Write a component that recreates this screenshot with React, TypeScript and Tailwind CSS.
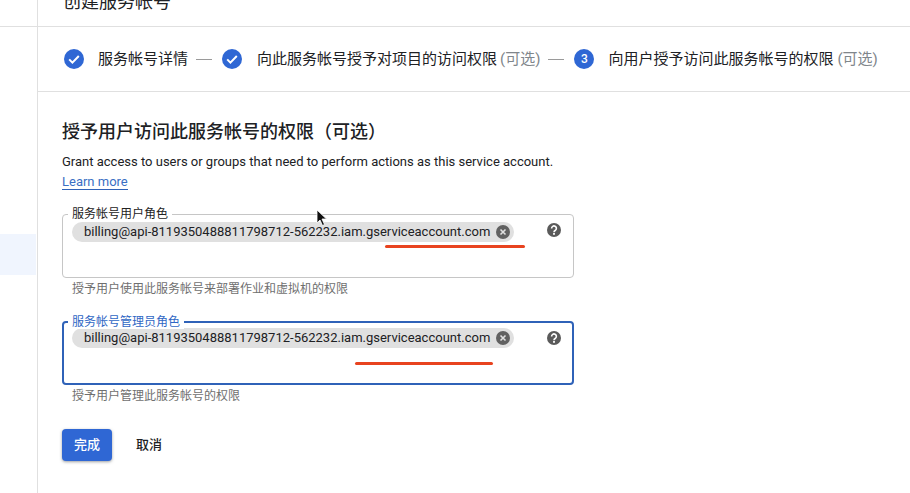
import React from "react";

const sans = "font-['Roboto','Noto_Sans_CJK_SC',sans-serif]";

function CheckStep() {
  return (
    <svg width="20" height="20" viewBox="0 0 20 20" className="shrink-0">
      <circle cx="10" cy="10" r="10" fill="#2f67d4" />
      <path d="M5.2 10.4l3.2 3.2 6.4-6.6" fill="none" stroke="#fff" strokeWidth="2" />
    </svg>
  );
}

function Dash() {
  return <div className="ml-[8px] mr-[10px] h-px w-4 shrink-0 bg-[#9a9a9a]" />;
}

function ChipClose() {
  return (
    <svg width="14" height="14" viewBox="0 0 14 14" className="shrink-0">
      <circle cx="7" cy="7" r="7" fill="#616161" />
      <path d="M4.5 4.5l5 5M9.5 4.5l-5 5" stroke="#e0e0e0" strokeWidth="1.6" />
    </svg>
  );
}

function Help() {
  return (
    <svg width="14" height="14" viewBox="0 0 14 14" className="shrink-0">
      <circle cx="7" cy="7" r="7" fill="#5a5a5a" />
      <path d="M4.6 5.4a2.4 2.4 0 1 1 3.8 1.9c-.8.6-1.4.9-1.4 1.9" fill="none" stroke="#fff" strokeWidth="1.6" />
      <rect x="6.1" y="10" width="1.8" height="1.8" fill="#fff" />
    </svg>
  );
}

function RoleField({ label, hint, focused, markClass }: { label: string; hint: string; focused?: boolean; markClass: string }) {
  return (
    <div>
      <div className={`relative h-[64px] w-[512px] rounded-[4px] bg-white ${focused ? "border-2 border-[#2f62b8]" : "border border-[#c6c6c6]"}`}>
        <span
          className={`absolute top-[-8px] bg-white px-[4px] text-[12px] leading-[14px] ${focused ? "left-[4px] text-[#2f67c4]" : "left-[5px] text-[#222]"}`}
        >
          {label}
        </span>
        <div className={`flex items-start justify-between ${focused ? "pl-[8px] pr-[11px] pt-[5px]" : "pl-[9px] pr-[12px] pt-[7px]"}`}>
          <div className="flex h-[20px] w-[442px] items-center justify-between rounded-full bg-[#e0e0e0] pl-[12px] pr-[4px] text-[13px] text-[#202124]">
            <span>billing@api-8119350488811798712-562232.iam.gserviceaccount.com</span>
            <ChipClose />
          </div>
          <div className={focused ? "mt-[3px]" : "mt-[1px]"}>
            <Help />
          </div>
        </div>
        <div className={`absolute h-[3px] rounded-full bg-[#e8431f] ${markClass}`} />
      </div>
      <p className="mt-[3px] pl-[10px] text-[12px] leading-[16px] text-[#6f6f6f]">{hint}</p>
    </div>
  );
}

export default function App() {
  return (
    <div className={`${sans} h-[493px] w-[910px] overflow-hidden bg-white text-[#202124]`}>
      <div className="flex h-[27px] border-b border-[#e0e0e0]">
        <div className="w-[38px] shrink-0 border-r border-[#e0e0e0]" />
        <div className="flex items-end overflow-hidden pl-[25px]">
          <h1 className="mb-[12px] whitespace-nowrap text-[18px] leading-[24px] text-[#202124]">创建服务帐号</h1>
        </div>
      </div>
      <div className="flex h-[466px]">
        <div className="w-[38px] shrink-0 border-r border-[#e0e0e0] pt-[207px]">
          <div className="h-[41px] w-[36px] bg-[#f0f5fe]" />
        </div>
        <div className="min-w-0 flex-1">
          <div className="flex h-[65px] items-center whitespace-nowrap border-b border-[#e0e0e0] pl-[26px] text-[15px]">
            <CheckStep />
            <span className="ml-[14px]">服务帐号详情</span>
            <Dash />
            <CheckStep />
            <span className="ml-[15px]">向此服务帐号授予对项目的访问权限</span>
            <span className="ml-[3px] text-[#80868b]">(可选)</span>
            <Dash />
            <div className="flex h-[20px] w-[20px] shrink-0 items-center justify-center rounded-full bg-[#2f67d4] text-[12px] font-medium text-white">3</div>
            <span className="ml-[14px]">向用户授予访问此服务帐号的权限</span>
            <span className="ml-[4px] text-[#80868b]">(可选)</span>
          </div>
          <div className="pl-[24px]">
            <h2 className="mt-[27px] text-[18px] font-medium leading-[26px]">授予用户访问此服务帐号的权限（可选）</h2>
            <p className="mt-[8px] text-[13px] leading-[18px]">Grant access to users or groups that need to perform actions as this service account.</p>
            <a className="mt-[3px] block w-fit border-b border-[#2f62b8] text-[13px] leading-[15px] text-[#3a6fc4]" href="#">
              Learn more
            </a>
            <div className="mt-[24px] flex flex-col gap-[24px]">
              <RoleField
                label="服务帐号用户角色"
                hint="授予用户使用此服务帐号来部署作业和虚拟机的权限"
                markClass="left-[322px] top-[30px] w-[140px]"
              />
              <RoleField
                label="服务帐号管理员角色"
                hint="授予用户管理此服务帐号的权限"
                focused
                markClass="left-[291px] top-[39px] w-[138px]"
              />
            </div>
            <div className="mt-[25px] flex items-center gap-[24px]">
              <button className="h-[32px] w-[50px] rounded-[4px] bg-[#2f67d4] text-[13px] font-medium text-white shadow-[0_1px_3px_rgba(60,64,67,0.5)]">完成</button>
              <button className="text-[13px] font-medium text-[#202124]">取消</button>
            </div>
          </div>
        </div>
      </div>
      <svg width="12" height="18" viewBox="0 0 12 18" className="absolute left-[316px] top-[209px]">
        <path d="M1 1v13l3-3 2.5 5.5 2-1L6 10h4.5z" fill="#111" stroke="#fff" strokeWidth=".8" />
      </svg>
    </div>
  );
}
